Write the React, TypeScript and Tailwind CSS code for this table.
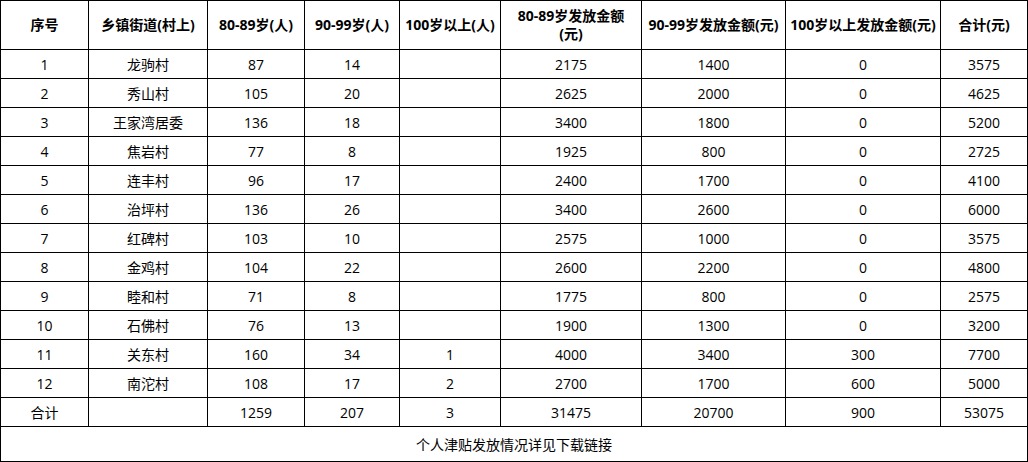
import React from 'react';

const rows: [string, string, string, string, string, string, string, string, string][] = [
  ['1', '龙驹村', '87', '14', '', '2175', '1400', '0', '3575'],
  ['2', '秀山村', '105', '20', '', '2625', '2000', '0', '4625'],
  ['3', '王家湾居委', '136', '18', '', '3400', '1800', '0', '5200'],
  ['4', '焦岩村', '77', '8', '', '1925', '800', '0', '2725'],
  ['5', '连丰村', '96', '17', '', '2400', '1700', '0', '4100'],
  ['6', '治坪村', '136', '26', '', '3400', '2600', '0', '6000'],
  ['7', '红碑村', '103', '10', '', '2575', '1000', '0', '3575'],
  ['8', '金鸡村', '104', '22', '', '2600', '2200', '0', '4800'],
  ['9', '睦和村', '71', '8', '', '1775', '800', '0', '2575'],
  ['10', '石佛村', '76', '13', '', '1900', '1300', '0', '3200'],
  ['11', '关东村', '160', '34', '1', '4000', '3400', '300', '7700'],
  ['12', '南沱村', '108', '17', '2', '2700', '1700', '600', '5000'],
  ['合计', '', '1259', '207', '3', '31475', '20700', '900', '53075'],
];

const headers: React.ReactNode[] = [
  '序号',
  '乡镇街道(村上)',
  '80-89岁(人)',
  '90-99岁(人)',
  '100岁以上(人)',
  <>
    80-89岁发放金额
    <br />
    (元)
  </>,
  '90-99岁发放金额(元)',
  '100岁以上发放金额(元)',
  '合计(元)',
];

export default function App() {
  return (
    <div className="w-[1028px] h-[462px] bg-white text-black text-[14px] font-['Open_Sans','Noto_Sans_CJK_SC',sans-serif]">
      <div className="grid grid-cols-[88px_119px_97px_95px_101px_141px_144px_155px_87px] border-t border-l border-black">
        {/* Header */}
        {headers.map((h, i) => (
          <div
            key={i}
            className="h-[49px] flex items-center justify-center text-center font-bold leading-[18px] whitespace-nowrap border-r border-b border-black"
          >
            <span>{h}</span>
          </div>
        ))}

        {/* Body */}
        {rows.map((r, ri) =>
          r.map((cell, ci) => (
            <div
              key={`${ri}-${ci}`}
              className="h-[29px] flex items-center justify-center whitespace-nowrap border-r border-b border-black"
            >
              {cell}
            </div>
          ))
        )}

        {/* Footer */}
        <div className="col-span-9 h-[35px] flex items-center justify-center border-r border-b border-black">
          个人津贴发放情况详见下载链接
        </div>
      </div>
    </div>
  );
}
